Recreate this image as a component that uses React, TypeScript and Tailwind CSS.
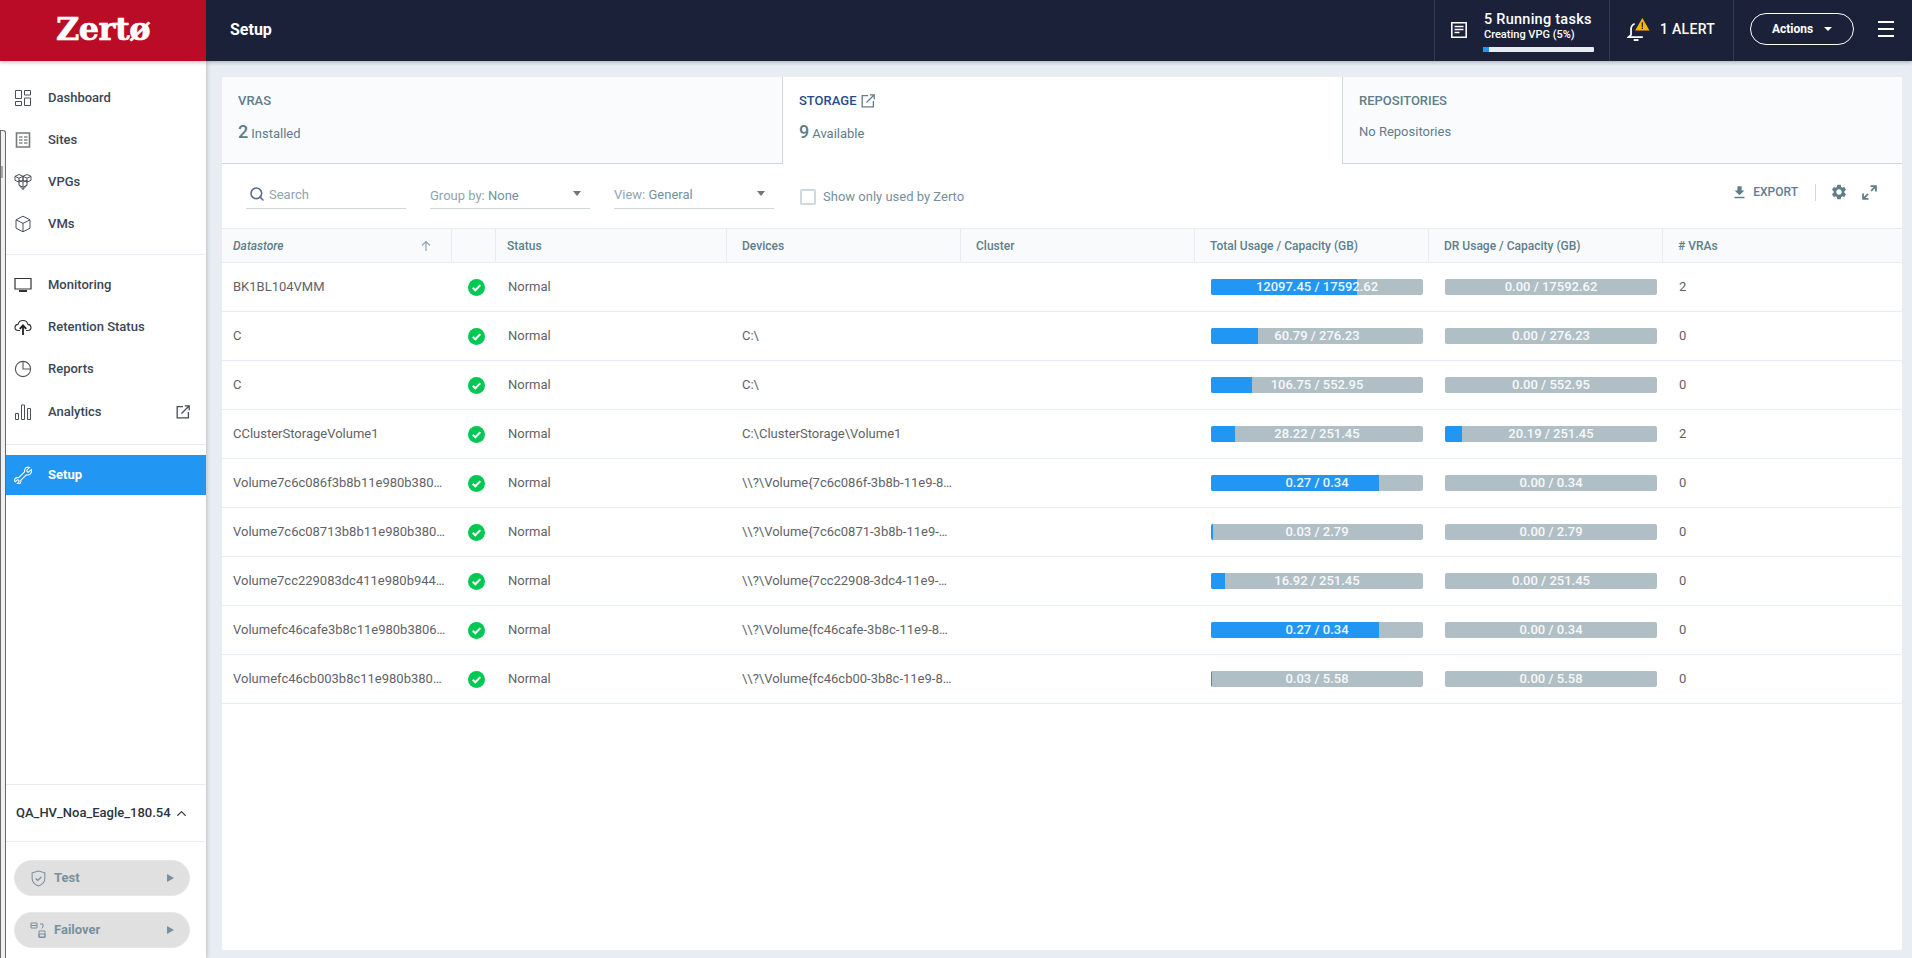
import React from 'react';
import { ChevronUp, Search } from 'lucide-react';

interface Row {
  name: string;
  device: string;
  total: [string, string];
  dr: [string, string];
  vras: number;
}

const rows: Row[] = [
  { name: 'BK1BL104VMM', device: '', total: ['12097.45', '17592.62'], dr: ['0.00', '17592.62'], vras: 2 },
  { name: 'C', device: 'C:\\', total: ['60.79', '276.23'], dr: ['0.00', '276.23'], vras: 0 },
  { name: 'C', device: 'C:\\', total: ['106.75', '552.95'], dr: ['0.00', '552.95'], vras: 0 },
  { name: 'CClusterStorageVolume1', device: 'C:\\ClusterStorage\\Volume1', total: ['28.22', '251.45'], dr: ['20.19', '251.45'], vras: 2 },
  { name: 'Volume7c6c086f3b8b11e980b380…', device: '\\\\?\\Volume{7c6c086f-3b8b-11e9-8…', total: ['0.27', '0.34'], dr: ['0.00', '0.34'], vras: 0 },
  { name: 'Volume7c6c08713b8b11e980b380…', device: '\\\\?\\Volume{7c6c0871-3b8b-11e9-…', total: ['0.03', '2.79'], dr: ['0.00', '2.79'], vras: 0 },
  { name: 'Volume7cc229083dc411e980b944…', device: '\\\\?\\Volume{7cc22908-3dc4-11e9-…', total: ['16.92', '251.45'], dr: ['0.00', '251.45'], vras: 0 },
  { name: 'Volumefc46cafe3b8c11e980b3806…', device: '\\\\?\\Volume{fc46cafe-3b8c-11e9-8…', total: ['0.27', '0.34'], dr: ['0.00', '0.34'], vras: 0 },
  { name: 'Volumefc46cb003b8c11e980b380…', device: '\\\\?\\Volume{fc46cb00-3b8c-11e9-8…', total: ['0.03', '5.58'], dr: ['0.00', '5.58'], vras: 0 },
];

const gridCols = 'grid grid-cols-[230px_44px_231px_234px_234px_234px_234px_1fr]';

const Line: React.FC<{ children: React.ReactNode; className?: string }> = ({ children, className }) => (
  <svg viewBox="0 0 18 18" className={className ?? 'w-[18px] h-[18px]'} fill="none" stroke="#4a5058" strokeWidth="1">
    {children}
  </svg>
);

const ExternalIcon: React.FC<{ color: string }> = ({ color }) => (
  <svg viewBox="0 0 14 14" className="w-[14px] h-[14px]" fill="none" stroke={color} strokeWidth="1.3">
    <path d="M7 1.6H1.2v11.2h11.2V7" />
    <path d="M5.5 8.5 13 1M8.8 .8h4.4v4.4" />
  </svg>
);

const UsageBar: React.FC<{ used: string; capacity: string }> = ({ used, capacity }) => {
  const pct = (parseFloat(used) / parseFloat(capacity)) * 100;
  return (
    <div className="relative w-[212px] h-4 bg-[#b0bec5] rounded-[2px] overflow-hidden">
      <div className="h-full bg-[#2196f3]" style={{ width: `${pct}%` }}></div>
      <div className="absolute inset-0 text-center text-[13px] leading-[15px] font-medium text-white/90">
        {used} / {capacity}
      </div>
    </div>
  );
};

const NavItem: React.FC<{ label: string; icon: React.ReactNode; h?: string; active?: boolean; right?: React.ReactNode }> = ({
  label,
  icon,
  h = 'h-[42px]',
  active,
  right,
}) => (
  <div className={`flex items-center pl-[8px] pr-4 ${h} ${active ? 'bg-[#2196f3] text-white font-bold' : 'text-[#3c4654] font-medium'}`}>
    <div className="w-[34px] flex items-center justify-start">{icon}</div>
    <span className="text-[13px]">{label}</span>
    {right && <div className="ml-auto">{right}</div>}
  </div>
);

const Sidebar: React.FC = () => (
  <aside className="w-[206px] shrink-0 bg-white shadow-[1px_0_4px_rgba(0,0,0,0.2)] pl-[6px] flex flex-col z-10 relative">
    {/* window behind the page, peeking out on the left edge */}
    <div className="absolute left-0 top-[69px] bottom-0 w-[6px] bg-[#f0f0f0] border-x border-t border-[#6b6b6b] rounded-tr-[3px]">
      <div className="mt-[35px] h-[12px] w-[2px] bg-[#a8a8a8]"></div>
    </div>
    <div className="pt-[16px]">
      <NavItem
        label="Dashboard"
        icon={
          <Line>
            <path d="M1.5 1.5h6v8h-6zM10.5 1.5h6v4.5h-6zM1.5 12.5h6v4h-6zM10.5 9h6v7.5h-6z" />
          </Line>
        }
      />
      <NavItem
        label="Sites"
        icon={
          <Line>
            <path d="M2.5 2h13v14h-13z" stroke="#777" strokeWidth="1.6" />
            <path d="M5 6h3.5M10 6h3.5M5 9h3.5M10 9h3.5M5 12h3.5M10 12h3.5" />
          </Line>
        }
      />
      <NavItem
        label="VPGs"
        icon={
          <Line>
            <path d="M5 1.5 1 3.3v4l4 1.8 4-1.8v-4zM13 1.5 9 3.3v4l4 1.8 4-1.8v-4zM9 9l-4-1.8v5l4 2 4-2v-5zM9 9v7.5M5 5.2l4-1.9M13 5.2 9 3.3M1 3.3l4 1.9v4M17 3.3l-4 1.9v4M5 12.2l4 4.3 4-4.3" />
          </Line>
        }
      />
      <NavItem
        label="VMs"
        icon={
          <Line>
            <path d="M9 1.2 2 4.8v8.4l7 3.6 7-3.6V4.8zM2 4.8l7 3.6 7-3.6M9 8.4v8.4" />
          </Line>
        }
      />
    </div>
    <div className="mt-[9px] mb-[9px] h-px bg-[#e8ecf2]"></div>
    <NavItem
      label="Monitoring"
      icon={
        <svg viewBox="0 0 18 18" className="w-[18px] h-[18px]" fill="none" stroke="#333" strokeWidth="1.2">
          <path d="M1 2.5h16v10.5H1z" />
          <path d="M5 15h8" strokeWidth="2" />
        </svg>
      }
    />
    <NavItem
      label="Retention Status"
      icon={
        <svg viewBox="0 0 18 18" className="w-[18px] h-[18px]" fill="none" stroke="#333" strokeWidth="1.1">
          <path d="M6 12.5H4.2C2.3 12.5 1 11.2 1 9.5c0-1.7 1.2-3 3-3.1C4.6 4 6.6 2.5 9 2.5s4.4 1.6 4.9 3.900c1.900.1 3.100 1.400 3.100 3.100 0 1.700-1.300 3-3.200 3H12" />
          <path d="M9 17V8M5.800 10.800 9 7.300l3.200 3.500" stroke="#222" strokeWidth="1.800" />
        </svg>
      }
    />
    <NavItem
      label="Reports"
      icon={
        <svg viewBox="0 0 18 18" className="w-[18px] h-[18px]" fill="none" stroke="#555" strokeWidth="1.1">
          <circle cx="9" cy="9" r="7.600" />
          <path d="M9 1.400V9h7.600" />
        </svg>
      }
    />
    <NavItem
      label="Analytics"
      h="h-[44px]"
      icon={
        <Line>
          <path d="M1.500 10.500h3v6h-3zM7.500 2h3v14.500h-3zM13.500 5.500h3v11h-3z" />
        </Line>
      }
      right={<ExternalIcon color="#454c55" />}
    />
    <div className="mt-[10px] mb-[10px] h-px bg-[#e8ecf2]"></div>
    <NavItem
      label="Setup"
      h="h-[40px]"
      active
      icon={
        <svg viewBox="0 0 18 18" className="w-[18px] h-[18px]" fill="none" stroke="#fff" strokeWidth="1.100">
          <path d="M11 2.500c1.300-1.300 3.200-1.600 4.500-1l-2.700 2.600.3 1.600 1.600.4 2.600-2.700c.6 1.400.3 3.200-1 4.500-1.200 1.100-2.700 1.400-4 .9L6.700 14.400c.4 1.300.1 2.500-.9 3.100" />
          <path d="M11.600 2c-1 1.200-1.300 2.400-.9 3.700L4.400 11.800c-1.300-.4-2.500-.1-3.300.8-.6 1-.6 2.200 0 3.200l2.200-2 1.400.3.400 1.500-2 2.100c1 .4 2 .3 3-.4" />
        </svg>
      }
    />
    <div className="mt-auto h-px bg-[#e8ecf2]"></div>
    <div className="h-[56px] pl-[10px] pr-[17px] flex items-center justify-between text-[13px] font-medium text-[#2b3440]">
      <span>QA_HV_Noa_Eagle_180.54</span>
      <ChevronUp size={15} strokeWidth={2} />
    </div>
    <div className="h-px bg-[#e8ecf2]"></div>
    <div className="pl-[8px] pr-4 pt-[18px] pb-[10px] flex flex-col gap-4">
      <div className="h-[36px] rounded-full bg-[#e0e0e0] border border-[#e6e6e6] flex items-center pl-[16px] pr-[15px]">
        <svg viewBox="0 0 16 18" className="w-[15px] h-[17px]" fill="none" stroke="#78909c" strokeWidth="1.100">
          <path d="M8 1 1.200 3v6c0 3.800 3 6.500 6.800 8 3.800-1.500 6.800-4.200 6.800-8V3z" />
          <path d="m5 9 2.200 2L11 7.500" strokeWidth="1.400" />
        </svg>
        <span className="ml-2 text-[13px] font-bold text-[#78909c]">Test</span>
        <span className="ml-auto w-0 h-0 border-y-[4px] border-y-transparent border-l-[7px] border-l-[#78909c]"></span>
      </div>
      <div className="h-[36px] rounded-full bg-[#e0e0e0] border border-[#e6e6e6] flex items-center pl-[15px] pr-[15px]">
        <svg viewBox="0 0 16 16" className="w-4 h-4" fill="none" stroke="#78909c" strokeWidth="1">
          <path d="M1 1h6v5H1zM1 3.500h6M9 12h6v3.500H9zM9 9h6v6H9zM10 2h3v3M11.500 6.500 13 5" />
        </svg>
        <span className="ml-2 text-[13px] font-bold text-[#78909c]">Failover</span>
        <span className="ml-auto w-0 h-0 border-y-[4px] border-y-transparent border-l-[7px] border-l-[#78909c]"></span>
      </div>
    </div>
  </aside>
);

const Header: React.FC = () => (
  <header className="h-[61px] shrink-0 flex bg-[#1b2139] text-white shadow-[0_1px_4px_rgba(0,0,0,0.3)] z-20 relative">
    <div className="w-[206px] shrink-0 bg-[#ba0c26] flex items-center justify-center pb-[3px]">
      <span className="font-['DejaVu_Serif',serif] font-bold text-[32px] leading-none tracking-[-0.5px] [-webkit-text-stroke:0.6px_white]">Zertø</span>
    </div>
    <div className="pl-6 pb-[2px] flex items-center text-[16px] font-bold">Setup</div>
    <div className="ml-auto flex h-full">
      <div className="w-[175px] border-l border-[#333a50] flex items-center pl-[16px]">
        <svg viewBox="0 0 16 16" className="w-4 h-4 mr-[17px] mb-[2px]" fill="none">
          <path d="M.8.800h14.400v14.400H.8z" stroke="#fff" strokeWidth="1.600" />
          <path d="M3.500 4.500h9M3.500 7.500h9M3.500 10.500h5" stroke="#fff" strokeWidth="1.400" />
        </svg>
        <div className="w-[110px] pt-[2px]">
          <div className="text-[14.5px] font-medium leading-4 tracking-[.25px] whitespace-nowrap">5 Running tasks</div>
          <div className="text-[11px] font-medium leading-[14px] whitespace-nowrap">Creating VPG (5%)</div>
          <div className="mt-[5px] -ml-[1px] h-[5px] bg-[#e8edf4] rounded-[1px] overflow-hidden">
            <div className="h-full bg-[#2196f3]" style={{ width: '5%' }}></div>
          </div>
        </div>
      </div>
      <div className="w-[124px] border-l border-[#333a50] flex items-center pl-[17px] pb-[2px]">
        <svg viewBox="0 0 24 24" className="w-[23px] h-[23px] mr-[10px]" fill="none">
          <path d="M8 6c-2.500 1-3.800 3.200-3.800 6v5.500L1.500 20h15" stroke="#fff" strokeWidth="1.800" />
          <path d="M7 23h5" stroke="#fff" strokeWidth="2" />
          <path d="M16 0 23.500 13h-15z" fill="#ffb300" />
          <path d="M16 4.500v4.500M16 10v1.500" stroke="#1b2139" strokeWidth="1.300" />
        </svg>
        <span className="text-[14px] font-medium tracking-[.3px]">1 ALERT</span>
      </div>
      <div className="w-[179px] border-l border-[#333a50] flex items-center pl-[16px] pb-[3px]">
        <div className="w-[104px] h-[32px] rounded-full border border-white flex items-center justify-center gap-[11px] text-[12px] font-bold">
          Actions
          <span className="w-0 h-0 border-x-[4px] border-x-transparent border-t-[4px] border-t-white"></span>
        </div>
        <div className="ml-6 w-4 flex flex-col gap-[5px]">
          <div className="h-[2px] bg-white"></div>
          <div className="h-[2px] bg-white"></div>
          <div className="h-[2px] bg-white"></div>
        </div>
      </div>
    </div>
  </header>
);

const Tabs: React.FC = () => (
  <div className="grid grid-cols-[561px_559px_1fr] h-[87px] text-[#78909c]">
    <div className="bg-[#fafbfd] border-b border-r border-[#cfd8dc] pl-4 pt-[16px] rounded-tl-[2px]">
      <div className="text-[13px] font-medium leading-4 text-[#607d8b]">VRAS</div>
      <div className="mt-[13px] flex items-baseline gap-[3px] text-[#607d8b]">
        <span className="text-[18px] font-medium leading-5">2</span>
        <span className="text-[13px]">Installed</span>
      </div>
    </div>
    <div className="bg-white pl-4 pt-[16px]">
      <div className="flex items-center gap-[5px] text-[13px] font-medium leading-4 text-[#264b8e]">
        STORAGE <ExternalIcon color="#607d8b" />
      </div>
      <div className="mt-[13px] flex items-baseline gap-[3px] text-[#607d8b]">
        <span className="text-[18px] font-medium leading-5">9</span>
        <span className="text-[13px]">Available</span>
      </div>
    </div>
    <div className="bg-[#fafbfd] border-b border-l border-[#cfd8dc] pl-4 pt-[16px] rounded-tr-[2px]">
      <div className="text-[13px] font-medium leading-4 text-[#607d8b]">REPOSITORIES</div>
      <div className="mt-[13px] text-[13px] leading-5 text-[#607d8b]">No Repositories</div>
    </div>
  </div>
);

const Toolbar: React.FC = () => (
  <div className="h-[64px] flex items-start pt-[15px] pl-6 pr-[25px] text-[13px] text-[#78909c]">
    <div className="w-[160px] h-[30px] border-b border-[#cfd8dc] flex items-center pl-[3px] gap-[4px]">
      <Search size={16} color="#5c6b94" strokeWidth={2.4} />
      <span className="text-[#90a4ae] pt-[2px]">Search</span>
    </div>
    <div className="ml-6 w-[160px] h-[30px] border-b border-[#cfd8dc] flex items-center justify-between pr-[9px]">
      <span className="text-[#90a4ae] pt-[4px]">
        Group by: <span className="text-[#78909c]">None</span>
      </span>
      <span className="w-0 h-0 border-x-[4.500px] border-x-transparent border-t-[5px] border-t-[#757575]"></span>
    </div>
    <div className="ml-6 w-[160px] h-[30px] border-b border-[#cfd8dc] flex items-center justify-between pr-[9px]">
      <span className="text-[#90a4ae] pt-[2px]">
        View: <span className="text-[#78909c]">General</span>
      </span>
      <span className="w-0 h-0 border-x-[4.500px] border-x-transparent border-t-[5px] border-t-[#757575]"></span>
    </div>
    <div className="ml-[26px] h-[30px] flex items-center gap-[7px] pt-[5px]">
      <span className="w-4 h-4 border-2 border-[#cfd8dc] rounded-[2px] bg-white"></span>
      <span className="text-[#78909c]">Show only used by Zerto</span>
    </div>
    <div className="ml-auto flex items-center h-[26px] text-[#607d8b]">
      <svg viewBox="0 0 24 24" className="w-[17px] h-[17px] mr-[5px]" fill="#607d8b">
        <path d="M19 9h-4V3H9v6H5l7 7 7-7zM5 18v2h14v-2H5z" />
      </svg>
      <span className="text-[12px] font-medium">EXPORT</span>
      <div className="ml-[17px] mr-[14px] w-px h-[17px] bg-[#cfd8dc]"></div>
      <svg viewBox="0 0 24 24" className="w-[18px] h-[18px] mr-[14px]" fill="#607d8b">
        <path d="M19.140 12.940c.04-.3.06-.61.06-.94 0-.32-.02-.64-.07-.94l2.030-1.580c.18-.14.23-.41.12-.61l-1.920-3.320c-.12-.22-.37-.29-.59-.22l-2.390.96c-.5-.38-1.030-.7-1.620-.94l-.36-2.540c-.04-.24-.24-.41-.48-.41h-3.840c-.24 0-.43.17-.47.41l-.36 2.540c-.59.24-1.130.57-1.620.94l-2.390-.96c-.22-.08-.47 0-.59.22L2.740 8.870c-.12.21-.08.47.12.61l2.030 1.580c-.05.3-.09.63-.09.94s.02.64.07.94l-2.030 1.580c-.18.14-.23.41-.12.61l1.920 3.320c.12.22.37.29.59.22l2.390-.96c.5.38 1.030.7 1.620.94l.36 2.540c.05.24.24.41.48.41h3.840c.24 0 .44-.17.47-.41l.36-2.540c.59-.24 1.130-.56 1.620-.94l2.390.96c.22.08.47 0 .59-.22l1.920-3.320c.12-.22.07-.47-.12-.61l-2.010-1.580zM12 15.600c-1.980 0-3.600-1.620-3.600-3.600s1.620-3.600 3.600-3.600 3.600 1.620 3.600 3.600-1.620 3.600-3.600 3.600z" />
      </svg>
      <svg viewBox="0 0 14 14" className="w-[15px] h-[15px]" fill="none" stroke="#607d8b" strokeWidth="1.700">
        <path d="M1 13 5.500 8.500M8.500 5.500 13 1M8 1h5v5M1 8v5h5" />
      </svg>
    </div>
  </div>
);

const headers: { label: string; cls?: string }[] = [
  { label: 'Datastore', cls: 'pl-[11px] italic' },
  { label: '' },
  { label: 'Status', cls: 'pl-[11px]' },
  { label: 'Devices', cls: 'pl-[15px]' },
  { label: 'Cluster', cls: 'pl-[15px]' },
  { label: 'Total Usage / Capacity (GB)', cls: 'pl-[15px]' },
  { label: 'DR Usage / Capacity (GB)', cls: 'pl-[15px]' },
  { label: '# VRAs', cls: 'pl-[15px]' },
];

const Table: React.FC = () => (
  <div>
    <div className={`${gridCols} h-[35px] bg-[#f9fafc] border-y border-[#e8edf4] text-[12px] font-medium text-[#607d8b]`}>
      {headers.map((h, i) => (
        <div key={i} className={`relative flex items-center border-r border-[#e8edf4] last:border-r-0 ${h.cls ?? ''}`}>
          {h.label}
          {i === 0 && (
            <svg viewBox="0 0 12 12" className="absolute right-[19px] top-[11px] w-3 h-3" fill="none" stroke="#90a4ae" strokeWidth="1.200">
              <path d="M6 11V1.500M2 5.500l4-4 4 4" />
            </svg>
          )}
        </div>
      ))}
    </div>
    {rows.map((r, i) => (
      <div key={i} className={`${gridCols} h-[49px] border-b border-[#e8edf4] items-center text-[13px] text-[#5f6368]`}>
        <div className="pl-[11px] whitespace-nowrap">{r.name}</div>
        <div className="flex pl-[16px]">
          <svg viewBox="0 0 18 18" className="w-[17px] h-[17px]">
            <circle cx="9" cy="9" r="9" fill="#00c853" />
            <path d="m5 9.300 2.800 2.700L13 6.500" fill="none" stroke="#fff" strokeWidth="2.200" />
          </svg>
        </div>
        <div className="pl-[12px]">Normal</div>
        <div className="pl-[15px] whitespace-nowrap">{r.device}</div>
        <div></div>
        <div className="pl-[16px]">
          <UsageBar used={r.total[0]} capacity={r.total[1]} />
        </div>
        <div className="pl-[16px]">
          <UsageBar used={r.dr[0]} capacity={r.dr[1]} />
        </div>
        <div className="pl-[16px]">{r.vras}</div>
      </div>
    ))}
  </div>
);

export default function App() {
  return (
    <div className="w-[1912px] h-[958px] flex flex-col overflow-hidden bg-[#e8edf4] font-['Roboto',sans-serif]">
      <Header />
      <div className="flex flex-1 min-h-0">
        <Sidebar />
        <main className="flex-1 pt-4 pl-4 pr-[10px] pb-2">
          <div className="h-full bg-white rounded-[2px]">
            <Tabs />
            <Toolbar />
            <Table />
          </div>
        </main>
      </div>
    </div>
  );
}
